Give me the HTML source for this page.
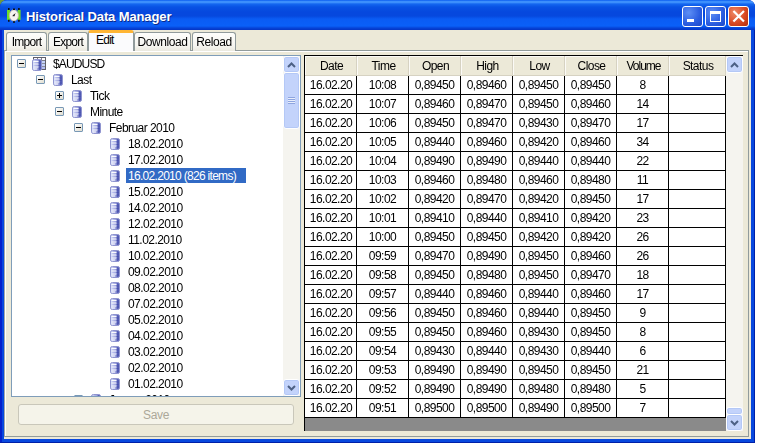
<!DOCTYPE html><html><head><meta charset="utf-8"><title>Historical Data Manager</title><style>*{box-sizing:border-box;margin:0;padding:0}
html,body{width:758px;height:446px;background:#fff;overflow:hidden}
body{font-family:"Liberation Sans",sans-serif;font-size:12px;color:#000;position:relative;letter-spacing:-0.55px}
#corner{position:absolute;left:0;top:0;width:7px;height:7px;background:#6f9a3c}
#win{position:absolute;left:0;top:0;width:755px;height:443px;background:#0848de;border-radius:7px 7px 0 0;overflow:hidden;box-shadow:inset -1px -1px 0 #0020a8,inset 2px 0 0 #0420cc}
#title{position:absolute;left:0;top:0;width:755px;height:30px;background:linear-gradient(#0a5cf0 0,#3c8ffc 1.5px,#3c8ffc 2.5px,#1467f0 4px,#0852e4 7px,#0648de 12px,#0648de 16px,#0a5cf4 19px,#0a60f8 26px,#0644d8 28px,#0534c4 30px)}
#ticon{position:absolute;left:6px;top:7px}
#ttext{opacity:0.999;position:absolute;left:26px;top:9px;font-weight:bold;font-size:13px;color:#fff;line-height:16px;text-shadow:1px 1px 0 #0a2a8a;letter-spacing:-0.12px}
.cb{position:absolute;top:6px;width:21px;height:21px;border:1px solid #fff;border-radius:3px;background:radial-gradient(circle at 30% 30%,#5e8ff5,#2a5ce0 60%,#1c48c8)}
#bmin{left:682px}#bmax{left:705px}#bclose{left:728px;background:radial-gradient(circle at 30% 30%,#ee8a68,#da4a24 55%,#b22c0a)}
#bmin i{position:absolute;left:4px;top:12px;width:7px;height:3px;background:#fff}
#bmax i{position:absolute;left:4px;top:4px;width:11px;height:11px;border:1px solid #fff;border-top-width:3px}
#bclose svg{position:absolute;left:-1px;top:-1px}
#client{position:absolute;left:4px;top:30px;width:747px;height:409px;background:#ece9d8;overflow:hidden}
#abs{position:absolute;left:-4px;top:-30px;width:755px;height:443px;opacity:0.999}
#page{position:absolute;left:4px;top:50px;width:745px;height:387px;border:1px solid #919b9c;border-left-color:#a2aaa6;box-shadow:inset 1px 1px 0 #fff}
.tab{position:absolute;top:32px;height:19px;border:1px solid #919b9c;border-bottom:none;border-radius:3px 3px 0 0;background:linear-gradient(#fdfdfb,#f6f5f0 70%,#ebe9df);text-align:center;line-height:19px;font-size:12px;letter-spacing:-0.75px}
.tab.sel{top:30px;height:21px;background:#fbfbfd;border-top:3px solid #ffb534;line-height:14px;z-index:2;text-align:left;padding-left:7px}
#tree{position:absolute;left:11px;top:55px;width:290px;height:342px;background:#fff;border:1px solid #7f9db9;overflow:hidden}
.tl{position:absolute;line-height:16px;height:16px;padding:0 2px 0 3px;white-space:nowrap}
.tsel{background:#316ac5;color:#fff}
.db{position:absolute}
.pm{position:absolute;width:9px;height:9px;border:1px solid #7898b5;background:linear-gradient(135deg,#fff,#e0ddd0);border-radius:1px}
.pm i{position:absolute;left:1px;top:3px;width:5px;height:1px;background:#000}
.pm b{position:absolute;left:3px;top:1px;width:1px;height:5px;background:#000}
.vsb{position:absolute;width:17px;background:#f5f4ef}
#tsb{right:0;top:0;height:340px;width:17px}
.sbtn{position:absolute;left:0;width:100%;height:17px;background:#c3d3fb;border:1px solid #fff;border-radius:3px;box-shadow:inset 0 0 0 1px #b4c8f6}
.sbtn.up{top:0}.sbtn.dn{bottom:0}
.sbtn svg{position:absolute;left:3px;top:5px}
.thumb{position:absolute;left:0;width:100%;background:#c3d3fb;border:1px solid #fff;border-radius:3px;box-shadow:inset 0 0 0 1px #b4c8f6}
.thumb i{position:absolute;left:4px;top:50%;margin-top:-4px;width:7px;height:7px;background:repeating-linear-gradient(#8ea5e0 0 1px,#e8eefc 1px 2px)}
#save{position:absolute;left:18px;top:404px;width:276px;height:21px;border:1px solid #c9c7ba;border-radius:3px;background:#f5f4ea;color:#aca899;text-align:center;line-height:21px;font-size:12px;letter-spacing:-0.35px}
#grid{position:absolute;left:304px;top:55px;width:439px;height:376px;background:#8a8a8a;border-left:1px solid #000;border-top:1px solid #000;overflow:hidden}
.hr{height:20px;display:flex;background:#ece9d8}
.hc{height:20px;line-height:21px;padding-left:2px;text-align:center;background:#ece9d8;border-right:1px solid #d6d2c2;border-bottom:1px solid #d6d2c2;box-shadow:inset 1px 1px 0 #fbfaf6}
.gr{height:19px;display:flex}
.gc{height:19px;line-height:18px;text-align:center;background:#fff;border-right:1px solid #000;border-bottom:1px solid #000}
#gsb{right:0;top:0;height:375px;background:#f5f4ef}
</style></head><body>
<div id="corner"></div><div id="win">
<div id="title"><svg id="ticon" width="16" height="17" viewBox="0 0 16 17"><rect x="1" y="2.9" width="3" height="10" fill="#6fdc2a"/><rect x="11.6" y="2.9" width="3" height="10" fill="#6fdc2a"/><path d="M2.8 1 V3 M12.9 1 V3 M2.8 12.8 V14.8 M12.9 12.8 V14.8" stroke="#111" stroke-width="1.6"/><ellipse cx="7.9" cy="8.4" rx="4.5" ry="5.6" fill="#f6f4f0" stroke="#c8bca6" stroke-width="0.9"/><path d="M8 1.5 V3 M8 14.2 V15.8" stroke="#111" stroke-width="2"/><path d="M7.9 8.4 L9.2 6.6 M7.9 8.4 L6.6 8.8" stroke="#333" stroke-width="1"/><circle cx="7.9" cy="8.4" r="0.9" fill="#222"/></svg><span id="ttext">Historical Data Manager</span>
<div class="cb" id="bmin"><i></i></div><div class="cb" id="bmax"><i></i></div><div class="cb" id="bclose"><svg width="21" height="21" viewBox="0 0 21 21"><path d="M6.2 5.8 L15.2 14.8 M15.2 5.8 L6.2 14.8" stroke="#fff" stroke-width="2.2" stroke-linecap="square"/></svg></div></div>
<div id="client"><div id="abs">
<svg width="0" height="0" style="position:absolute"><defs><linearGradient id="dbg" x1="0" x2="1" y1="0" y2="0"><stop offset="0" stop-color="#dfe8ff"/><stop offset="0.3" stop-color="#b8bdec"/><stop offset="0.6" stop-color="#9ca2dc"/><stop offset="0.82" stop-color="#464fb0"/><stop offset="1" stop-color="#6a72c0"/></linearGradient></defs></svg>
<div id="page"></div>
<div class="tab" style="left:6px;width:41px;letter-spacing:-0.75px">Import</div>
<div class="tab" style="left:48px;width:40px;letter-spacing:-0.75px">Export</div>
<div class="tab sel" style="left:88px;width:46px;letter-spacing:-0.75px">Edit</div>
<div class="tab" style="left:134px;width:57px;letter-spacing:-0.45px">Download</div>
<div class="tab" style="left:192px;width:44px;letter-spacing:-0.4px">Reload</div>
<div id="tree">
<div class="pm" style="left:5px;top:3px"><i></i></div>
<svg class="db" style="left:20px;top:1px" width="15" height="14" viewBox="0 0 15 14"><rect x="1.5" y="0.5" width="12" height="12" fill="#fbfbff" stroke="#5e5e68"/><path d="M5.5 1 V3.5 M9.5 1 V12 M2 3.5 H13 M9.5 6.5 H13 M9.5 9.5 H13" stroke="#70707c" stroke-width="0.9"/><rect x="10" y="4" width="3" height="2.2" fill="#c4d2f8"/><rect x="10" y="7" width="3" height="2.2" fill="#c4d2f8"/><rect x="10" y="10" width="3" height="2" fill="#b4bef0"/><g transform="translate(0,2)"><rect x="0.5" y="0.5" width="9" height="11" rx="2" ry="1.6" fill="url(#dbg)" stroke="#8f94cf" stroke-width="1"/><path d="M1.5 2.5 H6.5 M1.5 5 H6.5 M1.5 8 H6.5 M1.5 10 H5" stroke="#ffffff" stroke-width="1" opacity="0.95"/><path d="M6.5 4 H8.5 M6.5 6.5 H8.5 M6.5 9 H8.5" stroke="#3b429c" stroke-width="0.8" opacity="0.6"/></g></svg>
<span class="tl" style="left:37px;top:0px;letter-spacing:-0.85px;padding-left:4px">$AUDUSD</span>
<div class="pm" style="left:24px;top:19px"><i></i></div>
<svg class="db" style="left:41px;top:18px" width="10" height="12" viewBox="0 0 10 12"><rect x="0.5" y="0.5" width="9" height="11" rx="2" ry="1.6" fill="url(#dbg)" stroke="#8f94cf" stroke-width="1"/><path d="M1.5 2.5 H6.5 M1.5 5 H6.5 M1.5 8 H6.5 M1.5 10 H5" stroke="#ffffff" stroke-width="1" opacity="0.95"/><path d="M6.5 4 H8.5 M6.5 6.5 H8.5 M6.5 9 H8.5" stroke="#3b429c" stroke-width="0.8" opacity="0.6"/></svg>
<span class="tl" style="left:56px;top:16px">Last</span>
<div class="pm" style="left:43px;top:35px"><i></i><b></b></div>
<svg class="db" style="left:60px;top:34px" width="10" height="12" viewBox="0 0 10 12"><rect x="0.5" y="0.5" width="9" height="11" rx="2" ry="1.6" fill="url(#dbg)" stroke="#8f94cf" stroke-width="1"/><path d="M1.5 2.5 H6.5 M1.5 5 H6.5 M1.5 8 H6.5 M1.5 10 H5" stroke="#ffffff" stroke-width="1" opacity="0.95"/><path d="M6.5 4 H8.5 M6.5 6.5 H8.5 M6.5 9 H8.5" stroke="#3b429c" stroke-width="0.8" opacity="0.6"/></svg>
<span class="tl" style="left:75px;top:32px">Tick</span>
<div class="pm" style="left:43px;top:51px"><i></i></div>
<svg class="db" style="left:60px;top:50px" width="10" height="12" viewBox="0 0 10 12"><rect x="0.5" y="0.5" width="9" height="11" rx="2" ry="1.6" fill="url(#dbg)" stroke="#8f94cf" stroke-width="1"/><path d="M1.5 2.5 H6.5 M1.5 5 H6.5 M1.5 8 H6.5 M1.5 10 H5" stroke="#ffffff" stroke-width="1" opacity="0.95"/><path d="M6.5 4 H8.5 M6.5 6.5 H8.5 M6.5 9 H8.5" stroke="#3b429c" stroke-width="0.8" opacity="0.6"/></svg>
<span class="tl" style="left:75px;top:48px">Minute</span>
<div class="pm" style="left:62px;top:67px"><i></i></div>
<svg class="db" style="left:79px;top:66px" width="10" height="12" viewBox="0 0 10 12"><rect x="0.5" y="0.5" width="9" height="11" rx="2" ry="1.6" fill="url(#dbg)" stroke="#8f94cf" stroke-width="1"/><path d="M1.5 2.5 H6.5 M1.5 5 H6.5 M1.5 8 H6.5 M1.5 10 H5" stroke="#ffffff" stroke-width="1" opacity="0.95"/><path d="M6.5 4 H8.5 M6.5 6.5 H8.5 M6.5 9 H8.5" stroke="#3b429c" stroke-width="0.8" opacity="0.6"/></svg>
<span class="tl" style="left:94px;top:64px">Februar 2010</span>
<svg class="db" style="left:98px;top:82px" width="10" height="12" viewBox="0 0 10 12"><rect x="0.5" y="0.5" width="9" height="11" rx="2" ry="1.6" fill="url(#dbg)" stroke="#8f94cf" stroke-width="1"/><path d="M1.5 2.5 H6.5 M1.5 5 H6.5 M1.5 8 H6.5 M1.5 10 H5" stroke="#ffffff" stroke-width="1" opacity="0.95"/><path d="M6.5 4 H8.5 M6.5 6.5 H8.5 M6.5 9 H8.5" stroke="#3b429c" stroke-width="0.8" opacity="0.6"/></svg>
<span class="tl" style="left:113px;top:80px">18.02.2010</span>
<svg class="db" style="left:98px;top:98px" width="10" height="12" viewBox="0 0 10 12"><rect x="0.5" y="0.5" width="9" height="11" rx="2" ry="1.6" fill="url(#dbg)" stroke="#8f94cf" stroke-width="1"/><path d="M1.5 2.5 H6.5 M1.5 5 H6.5 M1.5 8 H6.5 M1.5 10 H5" stroke="#ffffff" stroke-width="1" opacity="0.95"/><path d="M6.5 4 H8.5 M6.5 6.5 H8.5 M6.5 9 H8.5" stroke="#3b429c" stroke-width="0.8" opacity="0.6"/></svg>
<span class="tl" style="left:113px;top:96px">17.02.2010</span>
<svg class="db" style="left:98px;top:114px" width="10" height="12" viewBox="0 0 10 12"><rect x="0.5" y="0.5" width="9" height="11" rx="2" ry="1.6" fill="url(#dbg)" stroke="#8f94cf" stroke-width="1"/><path d="M1.5 2.5 H6.5 M1.5 5 H6.5 M1.5 8 H6.5 M1.5 10 H5" stroke="#ffffff" stroke-width="1" opacity="0.95"/><path d="M6.5 4 H8.5 M6.5 6.5 H8.5 M6.5 9 H8.5" stroke="#3b429c" stroke-width="0.8" opacity="0.6"/></svg>
<span class="tl tsel" style="left:114px;top:112px;width:120px;padding-left:2px;height:15px;letter-spacing:-0.7px">16.02.2010 (826 items)</span>
<svg class="db" style="left:98px;top:130px" width="10" height="12" viewBox="0 0 10 12"><rect x="0.5" y="0.5" width="9" height="11" rx="2" ry="1.6" fill="url(#dbg)" stroke="#8f94cf" stroke-width="1"/><path d="M1.5 2.5 H6.5 M1.5 5 H6.5 M1.5 8 H6.5 M1.5 10 H5" stroke="#ffffff" stroke-width="1" opacity="0.95"/><path d="M6.5 4 H8.5 M6.5 6.5 H8.5 M6.5 9 H8.5" stroke="#3b429c" stroke-width="0.8" opacity="0.6"/></svg>
<span class="tl" style="left:113px;top:128px">15.02.2010</span>
<svg class="db" style="left:98px;top:146px" width="10" height="12" viewBox="0 0 10 12"><rect x="0.5" y="0.5" width="9" height="11" rx="2" ry="1.6" fill="url(#dbg)" stroke="#8f94cf" stroke-width="1"/><path d="M1.5 2.5 H6.5 M1.5 5 H6.5 M1.5 8 H6.5 M1.5 10 H5" stroke="#ffffff" stroke-width="1" opacity="0.95"/><path d="M6.5 4 H8.5 M6.5 6.5 H8.5 M6.5 9 H8.5" stroke="#3b429c" stroke-width="0.8" opacity="0.6"/></svg>
<span class="tl" style="left:113px;top:144px">14.02.2010</span>
<svg class="db" style="left:98px;top:162px" width="10" height="12" viewBox="0 0 10 12"><rect x="0.5" y="0.5" width="9" height="11" rx="2" ry="1.6" fill="url(#dbg)" stroke="#8f94cf" stroke-width="1"/><path d="M1.5 2.5 H6.5 M1.5 5 H6.5 M1.5 8 H6.5 M1.5 10 H5" stroke="#ffffff" stroke-width="1" opacity="0.95"/><path d="M6.5 4 H8.5 M6.5 6.5 H8.5 M6.5 9 H8.5" stroke="#3b429c" stroke-width="0.8" opacity="0.6"/></svg>
<span class="tl" style="left:113px;top:160px">12.02.2010</span>
<svg class="db" style="left:98px;top:178px" width="10" height="12" viewBox="0 0 10 12"><rect x="0.5" y="0.5" width="9" height="11" rx="2" ry="1.6" fill="url(#dbg)" stroke="#8f94cf" stroke-width="1"/><path d="M1.5 2.5 H6.5 M1.5 5 H6.5 M1.5 8 H6.5 M1.5 10 H5" stroke="#ffffff" stroke-width="1" opacity="0.95"/><path d="M6.5 4 H8.5 M6.5 6.5 H8.5 M6.5 9 H8.5" stroke="#3b429c" stroke-width="0.8" opacity="0.6"/></svg>
<span class="tl" style="left:113px;top:176px">11.02.2010</span>
<svg class="db" style="left:98px;top:194px" width="10" height="12" viewBox="0 0 10 12"><rect x="0.5" y="0.5" width="9" height="11" rx="2" ry="1.6" fill="url(#dbg)" stroke="#8f94cf" stroke-width="1"/><path d="M1.5 2.5 H6.5 M1.5 5 H6.5 M1.5 8 H6.5 M1.5 10 H5" stroke="#ffffff" stroke-width="1" opacity="0.95"/><path d="M6.5 4 H8.5 M6.5 6.5 H8.5 M6.5 9 H8.5" stroke="#3b429c" stroke-width="0.8" opacity="0.6"/></svg>
<span class="tl" style="left:113px;top:192px">10.02.2010</span>
<svg class="db" style="left:98px;top:210px" width="10" height="12" viewBox="0 0 10 12"><rect x="0.5" y="0.5" width="9" height="11" rx="2" ry="1.6" fill="url(#dbg)" stroke="#8f94cf" stroke-width="1"/><path d="M1.5 2.5 H6.5 M1.5 5 H6.5 M1.5 8 H6.5 M1.5 10 H5" stroke="#ffffff" stroke-width="1" opacity="0.95"/><path d="M6.5 4 H8.5 M6.5 6.5 H8.5 M6.5 9 H8.5" stroke="#3b429c" stroke-width="0.8" opacity="0.6"/></svg>
<span class="tl" style="left:113px;top:208px">09.02.2010</span>
<svg class="db" style="left:98px;top:226px" width="10" height="12" viewBox="0 0 10 12"><rect x="0.5" y="0.5" width="9" height="11" rx="2" ry="1.6" fill="url(#dbg)" stroke="#8f94cf" stroke-width="1"/><path d="M1.5 2.5 H6.5 M1.5 5 H6.5 M1.5 8 H6.5 M1.5 10 H5" stroke="#ffffff" stroke-width="1" opacity="0.95"/><path d="M6.5 4 H8.5 M6.5 6.5 H8.5 M6.5 9 H8.5" stroke="#3b429c" stroke-width="0.8" opacity="0.6"/></svg>
<span class="tl" style="left:113px;top:224px">08.02.2010</span>
<svg class="db" style="left:98px;top:242px" width="10" height="12" viewBox="0 0 10 12"><rect x="0.5" y="0.5" width="9" height="11" rx="2" ry="1.6" fill="url(#dbg)" stroke="#8f94cf" stroke-width="1"/><path d="M1.5 2.5 H6.5 M1.5 5 H6.5 M1.5 8 H6.5 M1.5 10 H5" stroke="#ffffff" stroke-width="1" opacity="0.95"/><path d="M6.5 4 H8.5 M6.5 6.5 H8.5 M6.5 9 H8.5" stroke="#3b429c" stroke-width="0.8" opacity="0.6"/></svg>
<span class="tl" style="left:113px;top:240px">07.02.2010</span>
<svg class="db" style="left:98px;top:258px" width="10" height="12" viewBox="0 0 10 12"><rect x="0.5" y="0.5" width="9" height="11" rx="2" ry="1.6" fill="url(#dbg)" stroke="#8f94cf" stroke-width="1"/><path d="M1.5 2.5 H6.5 M1.5 5 H6.5 M1.5 8 H6.5 M1.5 10 H5" stroke="#ffffff" stroke-width="1" opacity="0.95"/><path d="M6.5 4 H8.5 M6.5 6.5 H8.5 M6.5 9 H8.5" stroke="#3b429c" stroke-width="0.8" opacity="0.6"/></svg>
<span class="tl" style="left:113px;top:256px">05.02.2010</span>
<svg class="db" style="left:98px;top:274px" width="10" height="12" viewBox="0 0 10 12"><rect x="0.5" y="0.5" width="9" height="11" rx="2" ry="1.6" fill="url(#dbg)" stroke="#8f94cf" stroke-width="1"/><path d="M1.5 2.5 H6.5 M1.5 5 H6.5 M1.5 8 H6.5 M1.5 10 H5" stroke="#ffffff" stroke-width="1" opacity="0.95"/><path d="M6.5 4 H8.5 M6.5 6.5 H8.5 M6.5 9 H8.5" stroke="#3b429c" stroke-width="0.8" opacity="0.6"/></svg>
<span class="tl" style="left:113px;top:272px">04.02.2010</span>
<svg class="db" style="left:98px;top:290px" width="10" height="12" viewBox="0 0 10 12"><rect x="0.5" y="0.5" width="9" height="11" rx="2" ry="1.6" fill="url(#dbg)" stroke="#8f94cf" stroke-width="1"/><path d="M1.5 2.5 H6.5 M1.5 5 H6.5 M1.5 8 H6.5 M1.5 10 H5" stroke="#ffffff" stroke-width="1" opacity="0.95"/><path d="M6.5 4 H8.5 M6.5 6.5 H8.5 M6.5 9 H8.5" stroke="#3b429c" stroke-width="0.8" opacity="0.6"/></svg>
<span class="tl" style="left:113px;top:288px">03.02.2010</span>
<svg class="db" style="left:98px;top:306px" width="10" height="12" viewBox="0 0 10 12"><rect x="0.5" y="0.5" width="9" height="11" rx="2" ry="1.6" fill="url(#dbg)" stroke="#8f94cf" stroke-width="1"/><path d="M1.5 2.5 H6.5 M1.5 5 H6.5 M1.5 8 H6.5 M1.5 10 H5" stroke="#ffffff" stroke-width="1" opacity="0.95"/><path d="M6.5 4 H8.5 M6.5 6.5 H8.5 M6.5 9 H8.5" stroke="#3b429c" stroke-width="0.8" opacity="0.6"/></svg>
<span class="tl" style="left:113px;top:304px">02.02.2010</span>
<svg class="db" style="left:98px;top:322px" width="10" height="12" viewBox="0 0 10 12"><rect x="0.5" y="0.5" width="9" height="11" rx="2" ry="1.6" fill="url(#dbg)" stroke="#8f94cf" stroke-width="1"/><path d="M1.5 2.5 H6.5 M1.5 5 H6.5 M1.5 8 H6.5 M1.5 10 H5" stroke="#ffffff" stroke-width="1" opacity="0.95"/><path d="M6.5 4 H8.5 M6.5 6.5 H8.5 M6.5 9 H8.5" stroke="#3b429c" stroke-width="0.8" opacity="0.6"/></svg>
<span class="tl" style="left:113px;top:320px">01.02.2010</span>
<div class="pm" style="left:62px;top:339px"><i></i><b></b></div>
<svg class="db" style="left:79px;top:338px" width="10" height="12" viewBox="0 0 10 12"><rect x="0.5" y="0.5" width="9" height="11" rx="2" ry="1.6" fill="url(#dbg)" stroke="#8f94cf" stroke-width="1"/><path d="M1.5 2.5 H6.5 M1.5 5 H6.5 M1.5 8 H6.5 M1.5 10 H5" stroke="#ffffff" stroke-width="1" opacity="0.95"/><path d="M6.5 4 H8.5 M6.5 6.5 H8.5 M6.5 9 H8.5" stroke="#3b429c" stroke-width="0.8" opacity="0.6"/></svg>
<span class="tl" style="left:94px;top:336px">Januar 2010</span>
<div class="vsb" id="tsb"><div class="sbtn up"><svg width="9" height="6" viewBox="0 0 9 6"><path d="M1 5 L4.5 1.5 L8 5" stroke="#4d6185" stroke-width="2" fill="none"/></svg></div><div class="thumb" style="top:16px;height:57px"><i></i></div><div class="sbtn dn"><svg width="9" height="6" viewBox="0 0 9 6"><path d="M1 1 L4.5 4.5 L8 1" stroke="#4d6185" stroke-width="2" fill="none"/></svg></div></div>
</div>
<div id="save">Save</div>
<div id="grid">
<div class="hr">
<div class="hc" style="width:52px">Date</div>
<div class="hc" style="width:52px">Time</div>
<div class="hc" style="width:52px">Open</div>
<div class="hc" style="width:52px">High</div>
<div class="hc" style="width:52px">Low</div>
<div class="hc" style="width:52px">Close</div>
<div class="hc" style="width:52px;letter-spacing:-1px">Volume</div>
<div class="hc" style="width:57px">Status</div>
</div>
<div class="gr">
<div class="gc" style="width:52px;padding-left:1px">16.02.20</div>
<div class="gc" style="width:52px">10:08</div>
<div class="gc" style="width:52px">0,89450</div>
<div class="gc" style="width:52px">0,89460</div>
<div class="gc" style="width:52px">0,89450</div>
<div class="gc" style="width:52px">0,89450</div>
<div class="gc" style="width:52px">8</div>
<div class="gc" style="width:57px"></div>
</div>
<div class="gr">
<div class="gc" style="width:52px;padding-left:1px">16.02.20</div>
<div class="gc" style="width:52px">10:07</div>
<div class="gc" style="width:52px">0,89460</div>
<div class="gc" style="width:52px">0,89470</div>
<div class="gc" style="width:52px">0,89450</div>
<div class="gc" style="width:52px">0,89460</div>
<div class="gc" style="width:52px">14</div>
<div class="gc" style="width:57px"></div>
</div>
<div class="gr">
<div class="gc" style="width:52px;padding-left:1px">16.02.20</div>
<div class="gc" style="width:52px">10:06</div>
<div class="gc" style="width:52px">0,89450</div>
<div class="gc" style="width:52px">0,89470</div>
<div class="gc" style="width:52px">0,89430</div>
<div class="gc" style="width:52px">0,89470</div>
<div class="gc" style="width:52px">17</div>
<div class="gc" style="width:57px"></div>
</div>
<div class="gr">
<div class="gc" style="width:52px;padding-left:1px">16.02.20</div>
<div class="gc" style="width:52px">10:05</div>
<div class="gc" style="width:52px">0,89440</div>
<div class="gc" style="width:52px">0,89460</div>
<div class="gc" style="width:52px">0,89420</div>
<div class="gc" style="width:52px">0,89460</div>
<div class="gc" style="width:52px">34</div>
<div class="gc" style="width:57px"></div>
</div>
<div class="gr">
<div class="gc" style="width:52px;padding-left:1px">16.02.20</div>
<div class="gc" style="width:52px">10:04</div>
<div class="gc" style="width:52px">0,89490</div>
<div class="gc" style="width:52px">0,89490</div>
<div class="gc" style="width:52px">0,89440</div>
<div class="gc" style="width:52px">0,89440</div>
<div class="gc" style="width:52px">22</div>
<div class="gc" style="width:57px"></div>
</div>
<div class="gr">
<div class="gc" style="width:52px;padding-left:1px">16.02.20</div>
<div class="gc" style="width:52px">10:03</div>
<div class="gc" style="width:52px">0,89460</div>
<div class="gc" style="width:52px">0,89480</div>
<div class="gc" style="width:52px">0,89460</div>
<div class="gc" style="width:52px">0,89480</div>
<div class="gc" style="width:52px">11</div>
<div class="gc" style="width:57px"></div>
</div>
<div class="gr">
<div class="gc" style="width:52px;padding-left:1px">16.02.20</div>
<div class="gc" style="width:52px">10:02</div>
<div class="gc" style="width:52px">0,89420</div>
<div class="gc" style="width:52px">0,89470</div>
<div class="gc" style="width:52px">0,89420</div>
<div class="gc" style="width:52px">0,89450</div>
<div class="gc" style="width:52px">17</div>
<div class="gc" style="width:57px"></div>
</div>
<div class="gr">
<div class="gc" style="width:52px;padding-left:1px">16.02.20</div>
<div class="gc" style="width:52px">10:01</div>
<div class="gc" style="width:52px">0,89410</div>
<div class="gc" style="width:52px">0,89440</div>
<div class="gc" style="width:52px">0,89410</div>
<div class="gc" style="width:52px">0,89420</div>
<div class="gc" style="width:52px">23</div>
<div class="gc" style="width:57px"></div>
</div>
<div class="gr">
<div class="gc" style="width:52px;padding-left:1px">16.02.20</div>
<div class="gc" style="width:52px">10:00</div>
<div class="gc" style="width:52px">0,89450</div>
<div class="gc" style="width:52px">0,89450</div>
<div class="gc" style="width:52px">0,89420</div>
<div class="gc" style="width:52px">0,89420</div>
<div class="gc" style="width:52px">26</div>
<div class="gc" style="width:57px"></div>
</div>
<div class="gr">
<div class="gc" style="width:52px;padding-left:1px">16.02.20</div>
<div class="gc" style="width:52px">09:59</div>
<div class="gc" style="width:52px">0,89470</div>
<div class="gc" style="width:52px">0,89490</div>
<div class="gc" style="width:52px">0,89450</div>
<div class="gc" style="width:52px">0,89460</div>
<div class="gc" style="width:52px">26</div>
<div class="gc" style="width:57px"></div>
</div>
<div class="gr">
<div class="gc" style="width:52px;padding-left:1px">16.02.20</div>
<div class="gc" style="width:52px">09:58</div>
<div class="gc" style="width:52px">0,89450</div>
<div class="gc" style="width:52px">0,89480</div>
<div class="gc" style="width:52px">0,89450</div>
<div class="gc" style="width:52px">0,89470</div>
<div class="gc" style="width:52px">18</div>
<div class="gc" style="width:57px"></div>
</div>
<div class="gr">
<div class="gc" style="width:52px;padding-left:1px">16.02.20</div>
<div class="gc" style="width:52px">09:57</div>
<div class="gc" style="width:52px">0,89440</div>
<div class="gc" style="width:52px">0,89460</div>
<div class="gc" style="width:52px">0,89440</div>
<div class="gc" style="width:52px">0,89460</div>
<div class="gc" style="width:52px">17</div>
<div class="gc" style="width:57px"></div>
</div>
<div class="gr">
<div class="gc" style="width:52px;padding-left:1px">16.02.20</div>
<div class="gc" style="width:52px">09:56</div>
<div class="gc" style="width:52px">0,89450</div>
<div class="gc" style="width:52px">0,89460</div>
<div class="gc" style="width:52px">0,89440</div>
<div class="gc" style="width:52px">0,89450</div>
<div class="gc" style="width:52px">9</div>
<div class="gc" style="width:57px"></div>
</div>
<div class="gr">
<div class="gc" style="width:52px;padding-left:1px">16.02.20</div>
<div class="gc" style="width:52px">09:55</div>
<div class="gc" style="width:52px">0,89450</div>
<div class="gc" style="width:52px">0,89460</div>
<div class="gc" style="width:52px">0,89430</div>
<div class="gc" style="width:52px">0,89450</div>
<div class="gc" style="width:52px">8</div>
<div class="gc" style="width:57px"></div>
</div>
<div class="gr">
<div class="gc" style="width:52px;padding-left:1px">16.02.20</div>
<div class="gc" style="width:52px">09:54</div>
<div class="gc" style="width:52px">0,89430</div>
<div class="gc" style="width:52px">0,89440</div>
<div class="gc" style="width:52px">0,89430</div>
<div class="gc" style="width:52px">0,89440</div>
<div class="gc" style="width:52px">6</div>
<div class="gc" style="width:57px"></div>
</div>
<div class="gr">
<div class="gc" style="width:52px;padding-left:1px">16.02.20</div>
<div class="gc" style="width:52px">09:53</div>
<div class="gc" style="width:52px">0,89490</div>
<div class="gc" style="width:52px">0,89490</div>
<div class="gc" style="width:52px">0,89450</div>
<div class="gc" style="width:52px">0,89450</div>
<div class="gc" style="width:52px">21</div>
<div class="gc" style="width:57px"></div>
</div>
<div class="gr">
<div class="gc" style="width:52px;padding-left:1px">16.02.20</div>
<div class="gc" style="width:52px">09:52</div>
<div class="gc" style="width:52px">0,89490</div>
<div class="gc" style="width:52px">0,89490</div>
<div class="gc" style="width:52px">0,89480</div>
<div class="gc" style="width:52px">0,89480</div>
<div class="gc" style="width:52px">5</div>
<div class="gc" style="width:57px"></div>
</div>
<div class="gr">
<div class="gc" style="width:52px;padding-left:1px">16.02.20</div>
<div class="gc" style="width:52px">09:51</div>
<div class="gc" style="width:52px">0,89500</div>
<div class="gc" style="width:52px">0,89500</div>
<div class="gc" style="width:52px">0,89490</div>
<div class="gc" style="width:52px">0,89500</div>
<div class="gc" style="width:52px">7</div>
<div class="gc" style="width:57px"></div>
</div>
<div class="vsb" id="gsb"><div class="sbtn up"><svg width="9" height="6" viewBox="0 0 9 6"><path d="M1 5 L4.5 1.5 L8 5" stroke="#4d6185" stroke-width="2" fill="none"/></svg></div><div class="thumb" style="top:351px;height:8px"></div><div class="sbtn dn"><svg width="9" height="6" viewBox="0 0 9 6"><path d="M1 1 L4.5 4.5 L8 1" stroke="#4d6185" stroke-width="2" fill="none"/></svg></div></div>
</div>
</div></div></div></body></html>
